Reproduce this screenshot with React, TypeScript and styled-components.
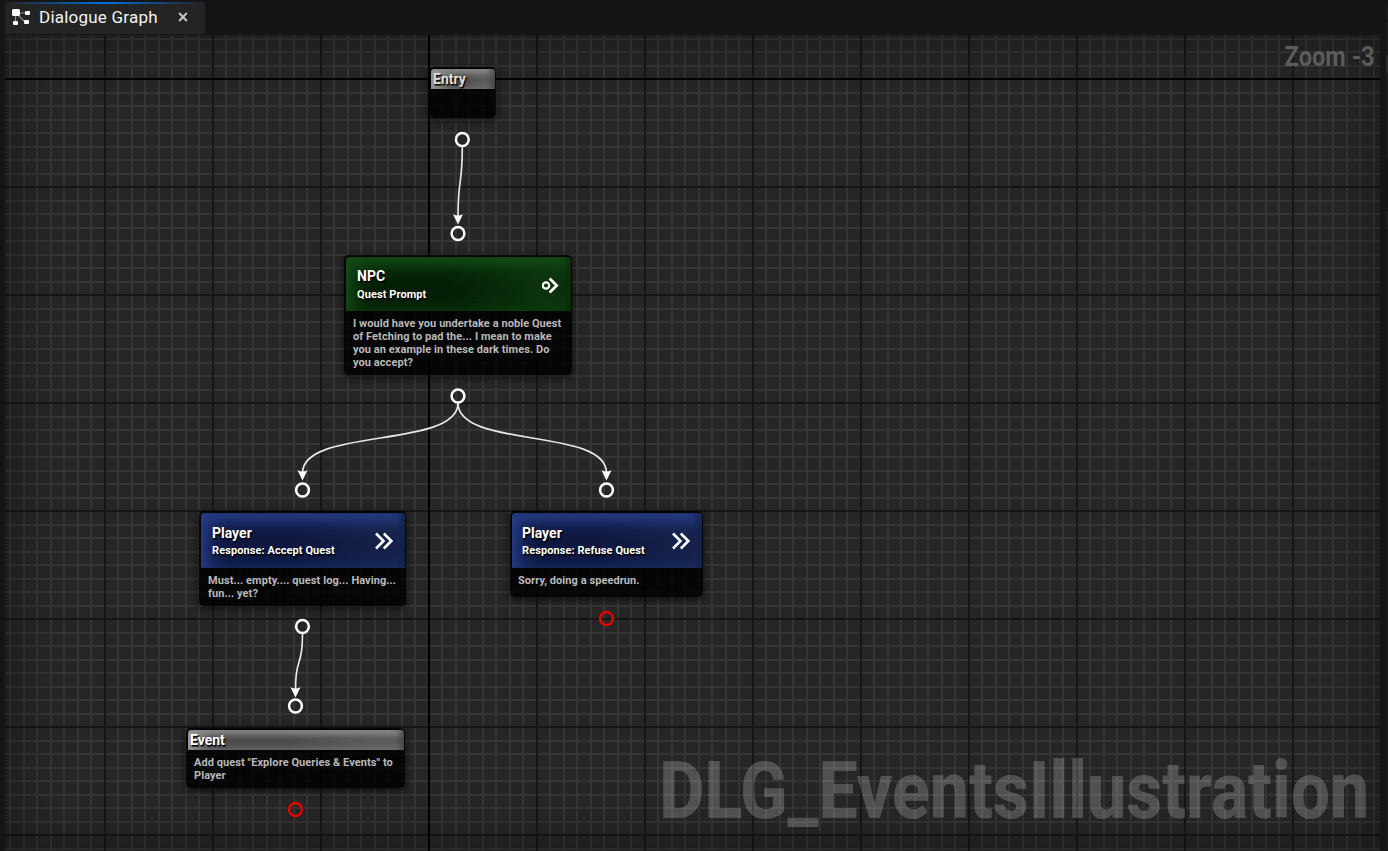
import React from "react";
import styled, { createGlobalStyle } from "styled-components";

const Global = createGlobalStyle`
  html, body { margin: 0; background: #151515; overflow: hidden; }
  * { box-sizing: border-box; }
`;

const Editor = styled.div`
  display: flex;
  height: 851px;
  width: 1388px;
  background: #151515;
  font-family: Roboto, "Liberation Sans", sans-serif;
`;

const Main = styled.main`
  display: flex;
  flex-direction: column;
  width: 1380px;
  padding-left: 5px;
`;

const Gutter = styled.aside`
  flex: 1;
  padding: 4px 0 0 6px;
  display: flex;
  flex-direction: column;
`;

const GutterPanel = styled.div<{ $h?: number; $bg: string; $round?: boolean }>`
  background: ${(p) => p.$bg};
  border-top-left-radius: ${(p) => (p.$round ? 3 : 0)}px;
  ${(p) => (p.$h ? `height: ${p.$h}px;` : "flex: 1;")}
  border-bottom: 1px solid #101010;
`;

const TabBar = styled.header`
  height: 35px;
  padding-top: 2px;
`;

const Tab = styled.div`
  display: flex;
  align-items: center;
  width: 200px;
  height: 32px;
  padding: 0 17px 2px 7px;
  border-radius: 4px 4px 0 0;
  background:
    linear-gradient(90deg, #24242400, #0070e0 50%, #24242400) top / 100% 2px no-repeat,
    #242424;
`;

const TabTitle = styled.span`
  margin-left: 9px;
  flex: 1;
  color: #f2f2f2;
  font-size: 17px;
  line-height: 20px;
  letter-spacing: 0.22px;
  white-space: nowrap;
`;

const Canvas = styled.section`
  position: relative;
  flex: 1;
  overflow: hidden;
  background-color: #262626;
  background-image:
    linear-gradient(#000, #000),
    linear-gradient(#000, #000),
    linear-gradient(90deg, #161616 2px, transparent 2px),
    linear-gradient(#161616 2px, transparent 2px),
    linear-gradient(90deg, #353535 2px, transparent 2px, transparent 13px, #353535 13px, #353535 15px, transparent 15px),
    linear-gradient(#353535 2px, transparent 2px, transparent 14px, #353535 14px, #353535 16px, transparent 16px);
  background-size: 2px 100%, 100% 2px, 108px 108px, 108px 108px, 27px 27px, 27px 27px;
  background-position: 423px 0, 0 43px, 99px 43px, 99px 43px, 99px 43px, 99px 43px;
  background-repeat: no-repeat, no-repeat, repeat, repeat, repeat, repeat;
`;

const Vignette = styled.div`
  position: absolute;
  inset: 0;
  box-shadow: inset 0 0 60px rgba(0, 0, 0, 0.4);
  pointer-events: none;
`;

const ZoomLabel = styled.div`
  position: absolute;
  top: 5px;
  right: 5px;
  color: #5b5b5b;
  font-size: 28px;
  font-weight: 700;
  line-height: 33px;
  white-space: nowrap;
  transform: scaleX(0.845);
  transform-origin: right;
`;

const Watermark = styled.div`
  position: absolute;
  right: 11px;
  bottom: 13px;
  color: rgba(255, 255, 255, 0.2);
  font-size: 80px;
  font-weight: 800;
  line-height: 94px;
  white-space: nowrap;
  transform: scaleX(0.872);
  transform-origin: right;
`;

const Wires = styled.svg`
  position: absolute;
  left: -5px;
  top: -35px;
`;

const Node = styled.article<{ $x: number; $y: number; $w: number; $h: number }>`
  position: absolute;
  left: ${(p) => p.$x - 5}px;
  top: ${(p) => p.$y - 35}px;
  width: ${(p) => p.$w}px;
  height: ${(p) => p.$h}px;
  display: flex;
  flex-direction: column;
  padding: 2px 1px 1px 2px;
  border-radius: 5px;
  overflow: hidden;
  background: rgba(0, 0, 0, 0.85);
`;

const NodeShadow = styled(Node)`
  background: none;
  overflow: visible;
  box-shadow: 0 2px 7px 1px rgba(0, 0, 0, 0.55);
`;

const tones = {
  green: { edge: "#155016", core: "#041f05", side: "#0c320e" },
  blue: { edge: "#273f88", core: "#0e1840", side: "#162148" },
  gray: { edge: "#969696", core: "#484848", side: "#585858" },
};
type Tone = keyof typeof tones;

const Head = styled.div<{ $tone: Tone; $nudge?: boolean }>`
  display: flex;
  flex: none;
  align-items: center;
  justify-content: space-between;
  height: ${(p) => (p.$tone === "blue" ? 55 : 54)}px;
  padding: ${(p) => (p.$tone === "blue" ? 1 : 2)}px 12px 0 ${(p) => (p.$nudge ? 10 : 11)}px;
  border-radius: 4px 4px 0 0;
  background: linear-gradient(
    90deg,
    ${(p) => tones[p.$tone].core} 45%,
    ${(p) => tones[p.$tone].side} 85%
  );
  box-shadow:
    inset -7px 0 8px -3px rgba(0, 0, 0, 0.45),
    inset 6px 6px 22px 0 ${(p) => tones[p.$tone].edge},
    inset 0 4px 12px ${(p) => tones[p.$tone].edge};
`;

const SlimHead = styled(Head)`
  height: 20px;
  padding: 0 2px;
  box-shadow:
    inset -6px 0 6px -3px rgba(0, 0, 0, 0.5),
    inset 14px 1px 14px -2px ${(p) => tones[p.$tone].edge},
    inset 0 3px 7px ${(p) => tones[p.$tone].edge};
`;

const Titles = styled.div`
  display: flex;
  flex-direction: column;
  color: #fff;
  text-shadow: 1px 1px 1px #000, 1px 2px 1px rgba(0, 0, 0, 0.6);
  white-space: nowrap;
`;

const Title = styled.div`
  font-size: 14px;
  line-height: 18px;
  font-weight: 700;
`;

const SlimTitle = styled(Title)<{ $dim?: boolean }>`
  color: ${(p) => (p.$dim ? "#dcdcdc" : "#fff")};
`;

const Subtitle = styled.div<{ $gap?: number }>`
  margin-top: ${(p) => p.$gap ?? 0}px;
  font-size: 11px;
  line-height: 17px;
  font-weight: 700;
  letter-spacing: 0.08px;
`;

const Body = styled.div<{ $nudge?: boolean }>`
  padding: 6px 0 0 ${(p) => (p.$nudge ? 6 : 7)}px;
  color: #b9b9b9;
  font-size: 11px;
  line-height: 13px;
  font-weight: 700;
  letter-spacing: 0.07px;
  white-space: nowrap;
`;

const GraphIcon = () => (
  <svg width="18" height="17" viewBox="0 0 18 17" fill="#fff">
    <path d="M6 4h8M6 6l8 8M3.5 6v8" stroke="#8d8d8d" strokeWidth="1.2" fill="none" />
    <rect x="0" y="0" width="8" height="7" rx="1.5" />
    <rect x="13" y="2" width="5" height="4" rx="1" />
    <rect x="1" y="12" width="5" height="4" rx="1" />
    <rect x="12" y="11" width="5" height="4" rx="1" />
  </svg>
);

const CloseIcon = () => (
  <svg width="10" height="10" viewBox="0 0 10 10">
    <path d="M1.2 1 8.8 9M8.8 1 1.2 9" stroke="#c4c4c4" strokeWidth="2" />
  </svg>
);

const PromptIcon = () => (
  <svg width="17" height="18" viewBox="0 0 17 18" fill="none" stroke="#fff">
    <circle cx="4" cy="9.5" r="3.2" strokeWidth="2.3" />
    <path d="M7.6 2.5 14.7 9.5l-7.1 7" strokeWidth="2.7" />
  </svg>
);

const ResponseIcon = () => (
  <svg width="18" height="18" viewBox="0 0 18 18" fill="none" stroke="#fff" strokeWidth="2.6">
    <path d="M1 1.5 8.5 9 1 16.5M8.8 1.5 16.3 9l-7.5 7.5" />
  </svg>
);

const Pin = ({ x, y, end }: { x: number; y: number; end?: boolean }) => (
  <circle cx={x} cy={y} r="6.4" fill="none" stroke={end ? "#e60000" : "#fff"} strokeWidth="2.5" />
);

const Wire = ({ x1, y1, x2, y2, k }: { x1: number; y1: number; x2: number; y2: number; k: number }) => (
  <g>
    <path
      d={`M${x1} ${y1}C${x1} ${y1 + k} ${x2} ${y2 - 7 - k} ${x2} ${y2 - 7}`}
      fill="none"
      stroke="#e6e6e6"
      strokeWidth="1.7"
    />
    <path d={`M${x2} ${y2 + 0.5}l-5 -10.3q5 2.4 10 0z`} fill="#fff" />
  </g>
);

type Box = { $x: number; $y: number; $w: number; $h: number };

const Card = ({ box, children }: { box: Box; children: React.ReactNode }) => (
  <>
    <NodeShadow {...box} />
    <Node {...box}>{children}</Node>
  </>
);

const Lines = ({ lines, nudge }: { lines: string[]; nudge?: boolean }) => (
  <Body $nudge={nudge}>
    {lines.map((l) => (
      <div key={l}>{l}</div>
    ))}
  </Body>
);

export default function App() {
  return (
    <Editor>
      <Global />
      <Main>
        <TabBar>
          <Tab>
            <GraphIcon />
            <TabTitle>Dialogue Graph</TabTitle>
            <CloseIcon />
          </Tab>
        </TabBar>
        <Canvas>
          <Vignette />
          <ZoomLabel>Zoom -3</ZoomLabel>
          <Card box={{ $x: 429, $y: 67, $w: 67, $h: 51 }}>
            <SlimHead $tone="gray">
              <Titles><SlimTitle $dim>Entry</SlimTitle></Titles>
            </SlimHead>
          </Card>
          <Card box={{ $x: 344, $y: 255, $w: 228, $h: 120 }}>
            <Head $tone="green">
              <Titles>
                <Title>NPC</Title>
                <Subtitle $gap={1}>Quest Prompt</Subtitle>
              </Titles>
              <PromptIcon />
            </Head>
            <Lines
              lines={[
                "I would have you undertake a noble Quest",
                "of Fetching to pad the... I mean to make",
                "you an example in these dark times. Do",
                "you accept?",
              ]}
            />
          </Card>
          <Card box={{ $x: 199, $y: 511, $w: 207, $h: 95 }}>
            <Head $tone="blue">
              <Titles>
                <Title>Player</Title>
                <Subtitle>Response: Accept Quest</Subtitle>
              </Titles>
              <ResponseIcon />
            </Head>
            <Lines lines={["Must... empty.... quest log... Having...", "fun... yet?"]} />
          </Card>
          <Card box={{ $x: 510, $y: 511, $w: 193, $h: 86 }}>
            <Head $tone="blue" $nudge>
              <Titles>
                <Title>Player</Title>
                <Subtitle>Response: Refuse Quest</Subtitle>
              </Titles>
              <ResponseIcon />
            </Head>
            <Lines nudge lines={["Sorry, doing a speedrun."]} />
          </Card>
          <Card box={{ $x: 186, $y: 728, $w: 219, $h: 60 }}>
            <SlimHead $tone="gray">
              <Titles><SlimTitle>Event</SlimTitle></Titles>
            </SlimHead>
            <Lines nudge lines={['Add quest "Explore Queries & Events" to', "Player"]} />
          </Card>
          <Wires width="1388" height="851">
            <Wire x1={462.3} y1={147} x2={458} y2={224} k={40} />
            <Wire x1={458} y1={403} x2={302.5} y2={480} k={46} />
            <Wire x1={458} y1={403} x2={606.5} y2={480} k={46} />
            <Wire x1={302.5} y1={634} x2={295.5} y2={697} k={36} />
            <Pin x={462.3} y={139.5} />
            <Pin x={458} y={233.5} />
            <Pin x={458} y={396} />
            <Pin x={302.5} y={490} />
            <Pin x={606.5} y={490} />
            <Pin x={606.5} y={618.5} end />
            <Pin x={302.5} y={626.5} />
            <Pin x={295.5} y={706} />
            <Pin x={295.5} y={809.5} end />
          </Wires>
          <Watermark>DLG_EventsIllustration</Watermark>
        </Canvas>
      </Main>
      <Gutter>
        <GutterPanel $h={17} $bg="#1c1c1c" $round />
        <GutterPanel $h={33} $bg="#1c1c1c" />
        <GutterPanel $h={21} $bg="#292929" />
        <GutterPanel $h={84} $bg="#1e1e1e" />
        <GutterPanel $h={52} $bg="#151515" />
        <GutterPanel $h={20} $bg="#1f1f1f" />
        <GutterPanel $bg="#191919" />
      </Gutter>
    </Editor>
  );
}
